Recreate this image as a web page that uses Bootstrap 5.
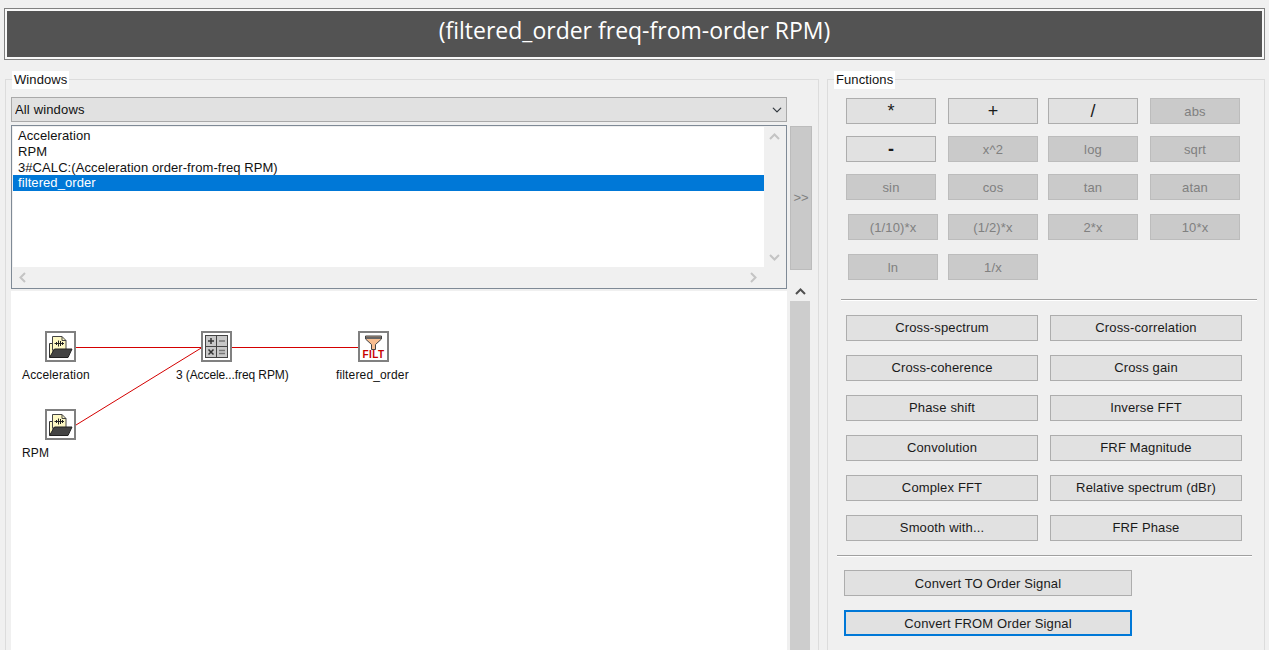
<!DOCTYPE html>
<html lang="en">
<head>
<meta charset="utf-8">
<title>Order calculator</title>
<link href="https://cdn.jsdelivr.net/npm/bootstrap@5.3.0/dist/css/bootstrap.min.css" rel="stylesheet">
<style>
html,body{height:650px;overflow:hidden}
body{background:#f0f0f0;font-family:"Liberation Sans",Arial,sans-serif;font-size:13px;color:#111;line-height:16px}
.title-bar{margin:9px 5px 0;height:50px;background:#535353;border:2px solid #f8f8f8;outline:1px solid #808080;color:#fff;font-family:"Open Sans",sans-serif;font-size:23px;line-height:38px;text-align:center}
.work{margin:20px 5px 0;gap:8px;height:571px}
.box{border:1px solid #dcdcdc;border-bottom:0;height:571px;position:relative;padding:0;flex:none}
.box-win{width:814px}
.box-fn{width:438px}
.box-label{position:absolute;top:-9px;background:#fff;height:18px;line-height:18px;padding:0 2px;left:6px;letter-spacing:.1px}
.win-grid{display:grid;grid-template-columns:776px 1fr;margin:17px 0 0 5px}
.sel{height:25px;width:776px;border:1px solid #a9a9a9;border-radius:0;background-color:#e1e1e1;padding:0 3px;font-size:13px;letter-spacing:.15px;color:#111;font-family:inherit;background-position:right 3px center;background-size:12px 10px;box-shadow:none}
.list-frame{margin-top:3px;height:164px;width:776px;border:1px solid #7f8a96;background:#f0f0f0;display:grid;grid-template-columns:751px 1fr;grid-template-rows:140px 1fr;padding:1px}
.list-group.list-items{background:#fff;padding-top:1px;border-radius:0;letter-spacing:.08px}
.list-items .list-group-item{border:0;padding:0 5px;height:16px;line-height:16px;background:transparent;color:#111;font-size:13px;border-radius:0}
.list-items .list-group-item.active{background:#0078d7;color:#fff}
.vtrack{display:flex;flex-direction:column;align-items:center;justify-content:space-between;padding:6px 0}
.htrack{grid-column:1 / span 2;display:flex;justify-content:space-between;align-items:center;padding:0 28px 0 6px}
.side{padding-left:3px}
.btn.more,.btn.more:disabled{display:block;margin-top:29px;width:22px;height:144px;background:#c9c9c9;border:1px solid #bcbcbc;border-radius:0;padding:0;color:#808080;font-size:13px;opacity:1}
.canvas{margin-top:2px;height:359px;background:#fff;position:relative;width:776px}
.node-ic{position:absolute;width:31px;height:31px}
.node-tx{position:absolute;white-space:nowrap;font-size:12px;line-height:14px;color:#111;letter-spacing:.15px}
.wires{position:absolute;left:0;top:0}
.vbar{margin-top:11px;width:20px;height:369px;background:#f0f0f0;display:flex;flex-direction:column;align-items:center}
.vbar-btn{height:20px;flex:none;display:flex;align-items:center;justify-content:center}
.vbar-thumb{flex:1;width:20px;background:#cdcdcd}
.btn.k{display:block;flex:none;height:26px;padding:0;line-height:24px;border-radius:0;font-size:13px;letter-spacing:.14px;border:1px solid #adadad;background:#e1e1e1;color:#1a1a1a;text-align:center;box-shadow:none;opacity:1}
.btn.k:disabled{background:#cacaca;border-color:#bcbcbc;color:#808080;opacity:1;line-height:26px}
.k-s{width:90px}
.k-w{width:192px}
.k-l{width:288px}
.btn.k.k-sym{font-size:18px;line-height:22px}
.btn.k.k-dash{font-weight:700}
.btn.k.focus-k{border:2px solid #0078d7;line-height:24px}
.fn-inner{padding:18px 0 0 18px}
.krow{display:flex}
.gap-a{gap:12px}
.gap-b{gap:10px}
.pad-2{margin-left:2px}
.rule{height:2px;border-top:1px solid #a0a0a0;border-bottom:1px solid #fff;opacity:1;margin:0}
.rule-a{margin:19px 7px 0 -5px}
.rule-b{margin:14px 12px 0 -9px}
.mt-12{margin-top:12px}
.mt-14{margin-top:14px}
.r-tight{margin-left:-2px}
.r-tight3{margin-left:2px}
.btn.k.conv-a{margin:13px 0 0 -2px;line-height:26px}
.btn.k.conv-b{margin:14px 0 0 -2px}
.sym-defs{position:absolute}
.nd-a{left:34px;top:40px}.nd-b{left:34px;top:118px}.nd-c{left:190px;top:40px}.nd-d{left:347px;top:40px}
.tx-a{left:11px;top:77px}.tx-b{left:11px;top:155px}.tx-c{left:165px;top:77px;letter-spacing:-.1px}.tx-d{left:325px;top:77px}
</style>
</head>
<body>
<div class="title-bar">(filtered_order freq-from-order RPM)</div>
<div class="work d-flex">
  <section class="box box-win">
    <span class="box-label">Windows</span>
    <div class="win-grid">
      <div>
        <select class="form-select sel"><option>All windows</option></select>
        <div class="list-frame">
          <div class="list-group list-items">
            <div class="list-group-item">Acceleration</div>
            <div class="list-group-item">RPM</div>
            <div class="list-group-item">3#CALC:(Acceleration order-from-freq RPM)</div>
            <div class="list-group-item active">filtered_order</div>
          </div>
          <div class="vtrack">
            <svg width="11" height="7" viewBox="0 0 11 7"><path d="M1 6L5.500 1.500L10 6" fill="none" stroke="#c4c4c4" stroke-width="2"/></svg>
            <svg width="11" height="7" viewBox="0 0 11 7"><path d="M1 1L5.500 5.500L10 1" fill="none" stroke="#c4c4c4" stroke-width="2"/></svg>
          </div>
          <div class="htrack">
            <svg width="7" height="11" viewBox="0 0 7 11"><path d="M6 1L1.500 5.500L6 10" fill="none" stroke="#c4c4c4" stroke-width="2"/></svg>
            <svg width="7" height="11" viewBox="0 0 7 11"><path d="M1 1L5.500 5.500L1 10" fill="none" stroke="#c4c4c4" stroke-width="2"/></svg>
          </div>
        </div>
        <div class="canvas">
          <svg class="wires" width="776" height="359" viewBox="0 0 776 359">
            <path d="M65 56.500H190M221 56.500H348" stroke="#d40000" stroke-width="1" fill="none"/>
            <path d="M65 134L191 56.500" stroke="#d40000" stroke-width="1" fill="none"/>
          </svg>
          <svg class="node-ic nd-a" viewBox="0 0 31 31"><use href="#ic-folder"/></svg>
          <span class="node-tx tx-a">Acceleration</span>
          <svg class="node-ic nd-b" viewBox="0 0 31 31"><use href="#ic-folder"/></svg>
          <span class="node-tx tx-b">RPM</span>
          <svg class="node-ic nd-c" viewBox="0 0 31 31">
            <rect x="1" y="1" width="29" height="29" fill="#fff" stroke="#808080" stroke-width="2"/>
            <rect x="4.500" y="4.500" width="22" height="22" fill="#c8c8c8" stroke="#444"/>
            <path d="M15.500 4.500V26.500M4.500 15.500H26.500" stroke="#444"/>
            <path d="M7 10H13M10 7V13" stroke="#333" stroke-width="1.500"/>
            <path d="M18 10H24" stroke="#777" stroke-width="1.500"/>
            <path d="M7.500 18.500L12.500 23.500M12.500 18.500L7.500 23.500" stroke="#333" stroke-width="1.500"/>
            <path d="M18 19.500H24M18 22.500H24" stroke="#777" stroke-width="1.500"/>
          </svg>
          <span class="node-tx tx-c">3 (Accele...freq RPM)</span>
          <svg class="node-ic nd-d" viewBox="0 0 31 31">
            <rect x="1" y="1" width="29" height="29" fill="#fff" stroke="#808080" stroke-width="2"/>
            <path d="M7.500 5H23.500V8L17.500 13.500V18.500H13.500V13.500L7.500 8Z" fill="#f7bd90" stroke="#444"/>
            <path d="M8 5.500H23V8H8Z" fill="#666"/>
            <text x="15.500" y="27" text-anchor="middle" font-family="Liberation Sans" font-weight="700" font-size="10" letter-spacing=".4" fill="#c80000">FILT</text>
          </svg>
          <span class="node-tx tx-d">filtered_order</span>
        </div>
      </div>
      <div class="side">
        <button class="btn more" disabled>&gt;&gt;</button>
        <div class="vbar">
          <div class="vbar-btn"><svg width="11" height="7" viewBox="0 0 11 7"><path d="M1 6L5.500 1.500L10 6" fill="none" stroke="#505050" stroke-width="2"/></svg></div>
          <div class="vbar-thumb"></div>
        </div>
      </div>
    </div>
  </section>
  <section class="box box-fn">
    <span class="box-label">Functions</span>
    <div class="fn-inner">
      <div class="krow gap-a"><button class="btn k k-s k-sym">*</button><button class="btn k k-s k-sym">+</button><button class="btn k k-s k-sym r-tight">/</button><button class="btn k k-s" disabled>abs</button></div>
      <div class="krow gap-a mt-12"><button class="btn k k-s k-sym k-dash">-</button><button class="btn k k-s" disabled>x^2</button><button class="btn k k-s r-tight" disabled>log</button><button class="btn k k-s" disabled>sqrt</button></div>
      <div class="krow gap-a mt-12"><button class="btn k k-s" disabled>sin</button><button class="btn k k-s" disabled>cos</button><button class="btn k k-s r-tight" disabled>tan</button><button class="btn k k-s" disabled>atan</button></div>
      <div class="krow mt-14 pad-2 gap-b"><button class="btn k k-s" disabled>(1/10)*x</button><button class="btn k k-s" disabled>(1/2)*x</button><button class="btn k k-s" disabled>2*x</button><button class="btn k k-s r-tight3" disabled>10*x</button></div>
      <div class="krow mt-14 pad-2 gap-b"><button class="btn k k-s" disabled>ln</button><button class="btn k k-s" disabled>1/x</button></div>
      <hr class="rule rule-a">
      <div class="krow gap-a mt-14"><button class="btn k k-w">Cross-spectrum</button><button class="btn k k-w">Cross-correlation</button></div>
      <div class="krow gap-a mt-14"><button class="btn k k-w">Cross-coherence</button><button class="btn k k-w">Cross gain</button></div>
      <div class="krow gap-a mt-14"><button class="btn k k-w">Phase shift</button><button class="btn k k-w">Inverse FFT</button></div>
      <div class="krow gap-a mt-14"><button class="btn k k-w">Convolution</button><button class="btn k k-w">FRF Magnitude</button></div>
      <div class="krow gap-a mt-14"><button class="btn k k-w">Complex FFT</button><button class="btn k k-w">Relative spectrum (dBr)</button></div>
      <div class="krow gap-a mt-14"><button class="btn k k-w">Smooth with...</button><button class="btn k k-w">FRF Phase</button></div>
      <hr class="rule rule-b">
      <button class="btn k k-l conv-a">Convert TO Order Signal</button>
      <button class="btn k k-l focus-k conv-b">Convert FROM Order Signal</button>
    </div>
  </section>
</div>
<svg width="0" height="0" class="sym-defs" aria-hidden="true">
  <symbol id="ic-folder" viewBox="0 0 31 31">
    <rect x="1" y="1" width="29" height="29" fill="#fff" stroke="#808080" stroke-width="2"/>
    <path d="M4.500 12.500H8V26H4.500Z" fill="#fdf8c4" stroke="#333"/>
    <path d="M7.500 5.500H17L21 9.500V19H7.500Z" fill="#fdf8c4" stroke="#444"/>
    <path d="M17 5.500V9.500H21" fill="none" stroke="#444"/>
    <path d="M9.500 12.500H19M11.500 11V14M13.500 9.500V15.500M15.500 10V15M17.500 11V14" stroke="#222"/>
    <path d="M4.500 26.500L9.500 18H27L23 26.500Z" fill="#444" stroke="#222"/>
  </symbol>
</svg>
</body>
</html>
